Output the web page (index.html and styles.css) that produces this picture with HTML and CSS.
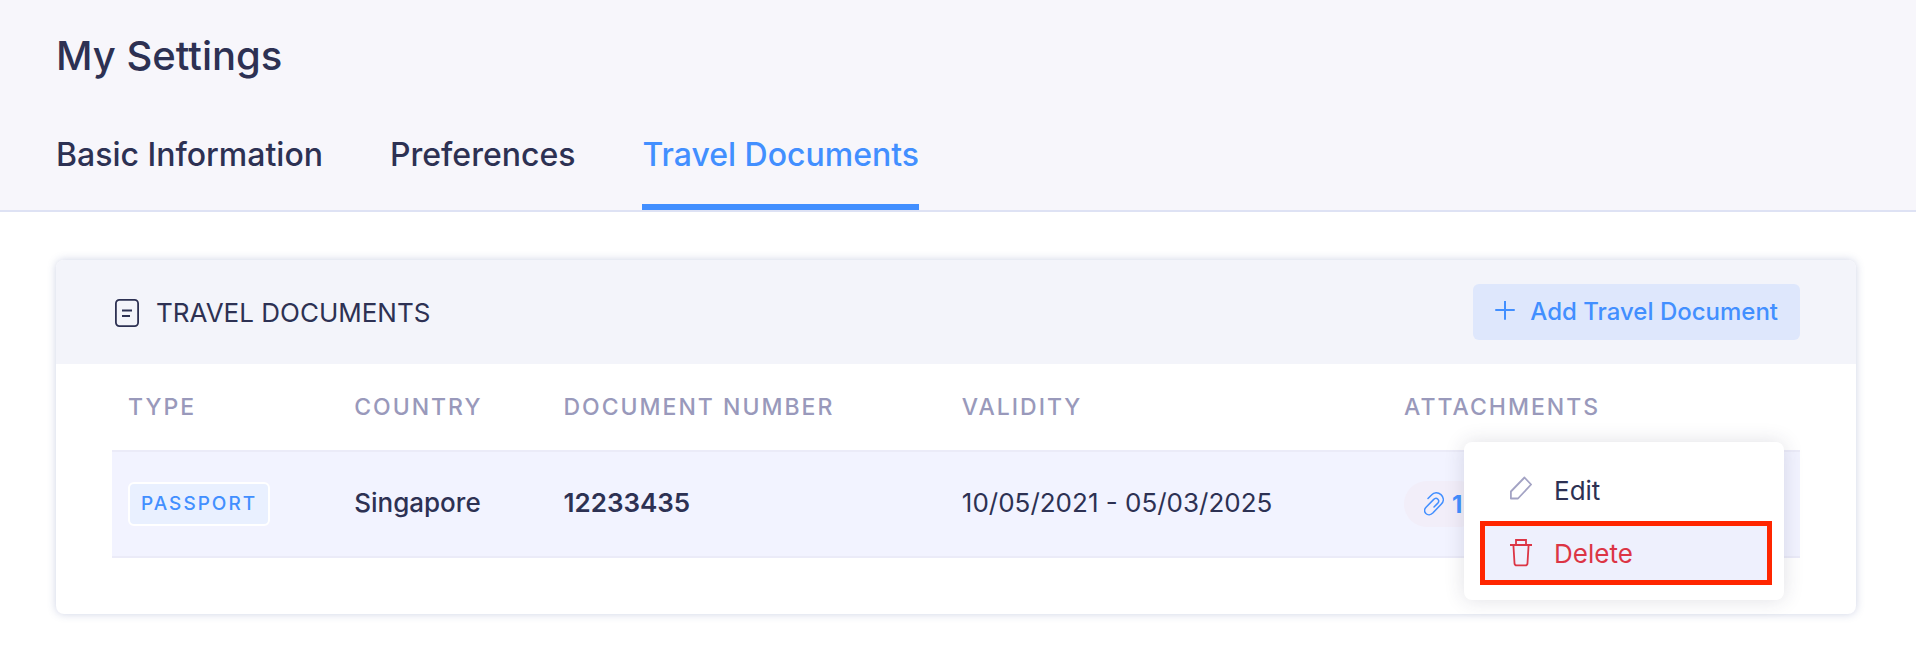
FILE: index.html
```html
<!DOCTYPE html>
<html lang="en">
<head>
  <meta charset="UTF-8">
  <meta name="viewport" content="width=device-width, initial-scale=1">
  <title>My Settings</title>
  <link rel="stylesheet" href="styles.css">
</head>
<body>
  <header class="page-header">
    <h1>My Settings</h1>
    <nav class="tabs">
      <a href="#basic" class="tab">Basic Information</a>
      <a href="#preferences" class="tab">Preferences</a>
      <a href="#documents" class="tab active">Travel Documents</a>
    </nav>
  </header>

  <main>
    <section class="card">
      <div class="card-header">
        <svg class="icon-doc" viewBox="0 0 24 28" fill="none" stroke="currentColor" stroke-width="1.8">
          <rect x="0.9" y="0.9" width="22.2" height="26.2" rx="3.5"/>
          <path d="M7 11.500h10M7 17h8"/>
        </svg>
        <h2>TRAVEL DOCUMENTS</h2>
        <button type="button" class="btn-add">
          <svg viewBox="0 0 20 20" fill="none" stroke="currentColor" stroke-width="2" stroke-linecap="round">
            <path d="M1 9h18M10 0v18"/>
          </svg>
          Add Travel Document
        </button>
      </div>

      <div class="card-body">
        <table class="documents">
          <thead>
            <tr>
              <th class="col-type">TYPE</th>
              <th class="col-country">COUNTRY</th>
              <th class="col-number">DOCUMENT NUMBER</th>
              <th class="col-validity">VALIDITY</th>
              <th>ATTACHMENTS</th>
            </tr>
          </thead>
          <tbody>
            <tr>
              <td><span class="badge">PASSPORT</span></td>
              <td class="text country">Singapore</td>
              <td class="text number">12233435</td>
              <td class="text">10/05/2021 - 05/03/2025</td>
              <td class="attachments">
                <a href="#attachment" class="pill">
                  <svg viewBox="0 0 20 24" fill="none" stroke="currentColor" stroke-width="1.5" stroke-linecap="round">
                    <path d="M4 6.500l3.500-3.600C10 .2 14 0 17 2.600c3 2.900 3 6.600.4 9.400L8.800 21c-2 2-5 2.300-6.900.5-1.900-1.900-1.600-4.500.4-6.600L9.500 7.600c1.400-1.400 3.200-1.500 4.400-.4 1.200 1.200 1 2.800-.3 4.200L10 15"/>
                  </svg>
                  1
                </a>
                <div class="menu">
                  <button type="button" class="menu-item">
                    <svg viewBox="0 0 22 28" fill="none" stroke="currentColor" stroke-width="1.8" stroke-linejoin="round">
                      <path d="M14.500 1.500l6.600 7L8 22.500H.9v-7z"/>
                    </svg>
                    Edit
                  </button>
                  <button type="button" class="menu-item delete">
                    <svg viewBox="0 0 22 28" fill="none" stroke="currentColor" stroke-width="1.8">
                      <path d="M0 6h22M6 5.500V1h10v4.500M3.400 6l1.100 18.300a2.200 2.200 0 0 0 2.200 2h8.600a2.200 2.200 0 0 0 2.200-2L18.600 6"/>
                    </svg>
                    Delete
                  </button>
                </div>
              </td>
            </tr>
          </tbody>
        </table>
      </div>
    </section>
  </main>
</body>
</html>
```
FILE: styles.css
```css
* {
  box-sizing: border-box;
}

body {
  margin: 0;
  background: #ffffff;
  color: #2d3153;
  font-family: Inter, "Liberation Sans", sans-serif;
  font-size: 26px;
}

h1, h2 {
  margin: 0;
}

button {
  font-family: inherit;
  border: none;
  cursor: pointer;
}

.page-header {
  padding: 32px 56px 0;
  background: #f7f6fb;
  border-bottom: 2px solid #dee2f4;
}

h1 {
  font-size: 40px;
  line-height: 48px;
  font-weight: 500;
}

.tabs {
  display: flex;
  gap: 67px;
  margin-top: 55px;
}

.tab {
  padding-bottom: 29px;
  border-bottom: 6px solid transparent;
  color: inherit;
  font-size: 32px;
  line-height: 40px;
  font-weight: 500;
  text-decoration: none;
}

.tab.active {
  color: #428fff;
  border-bottom-color: #428fff;
}

main {
  padding: 48px 60px 54px 56px;
}

.card {
  border-radius: 8px;
  box-shadow: 0 0 8px rgba(60, 80, 150, 0.25);
}

.card-header {
  display: flex;
  align-items: center;
  padding: 24px 56px;
  background: #f3f4fa;
  border-radius: 8px 8px 0 0;
}

.icon-doc {
  width: 24px;
  height: 28px;
  margin: 2px 17px 0 3px;
}

h2 {
  padding-top: 2px;
  font-size: 26px;
  line-height: 32px;
  font-weight: 400;
}

.btn-add {
  display: flex;
  align-items: center;
  gap: 15px;
  height: 56px;
  margin-left: auto;
  padding: 0 22px 2px;
  border-radius: 6px;
  background: #dee7fc;
  color: #428fff;
  font-size: 24px;
  font-weight: 500;
}

.btn-add svg {
  width: 20px;
  height: 20px;
}

.card-body {
  padding: 0 56px 56px;
}

.documents {
  width: 100%;
  table-layout: fixed;
  border-collapse: separate;
  border-spacing: 0;
}

.col-type { width: 13.4%; }
.col-country { width: 12.4%; }
.col-number { width: 23.6%; }
.col-validity { width: 26.2%; }

.documents th {
  height: 86px;
  padding: 0 16px;
  color: #9999bb;
  font-size: 23px;
  font-weight: 500;
  letter-spacing: 2px;
  text-align: left;
}

.documents td {
  height: 108px;
  padding: 0 16px;
  background: #f2f3ff;
  border-top: 2px solid #ebebf8;
  border-bottom: 2px solid #ebebf8;
}

.documents .text {
  padding-bottom: 4px;
}

.country {
  font-weight: 500;
}

.number {
  font-weight: 600;
}

.badge {
  display: inline-block;
  padding: 0 11px;
  border: 2px solid #ffffff;
  border-radius: 6px;
  background: #e9f0ff;
  color: #428fff;
  font-size: 19px;
  line-height: 40px;
  font-weight: 500;
  letter-spacing: 2px;
  vertical-align: middle;
}

.documents .attachments {
  position: relative;
}

.pill {
  display: inline-flex;
  align-items: center;
  gap: 8px;
  height: 46px;
  padding: 0 20px;
  border-radius: 23px;
  background: #f2eef9;
  color: #428fff;
  font-size: 24px;
  font-weight: 700;
  text-decoration: none;
  vertical-align: middle;
}

.pill svg {
  width: 20px;
  height: 24px;
}

/* row actions, opened over the last cell */
.menu {
  position: absolute;
  top: -10px;
  right: 16px;
  width: 320px;
  padding: 17px 12px 15px 16px;
  border-radius: 8px;
  background: #ffffff;
  box-shadow: 0 0 20px rgba(45, 49, 83, 0.15);
}

.menu-item {
  display: flex;
  align-items: center;
  gap: 22px;
  width: 100%;
  height: 62px;
  padding: 0 25px;
  border: 5px solid transparent;
  background: none;
  color: inherit;
  font-size: 26px;
}

.menu-item svg {
  width: 22px;
  height: 28px;
  color: #a3a3c4;
}

.menu-item.delete,
.menu-item.delete svg {
  color: #dc3545;
}

.menu-item.delete {
  height: 64px;
  border-color: #ff2600;
  background: #eef0fd;
}
```
